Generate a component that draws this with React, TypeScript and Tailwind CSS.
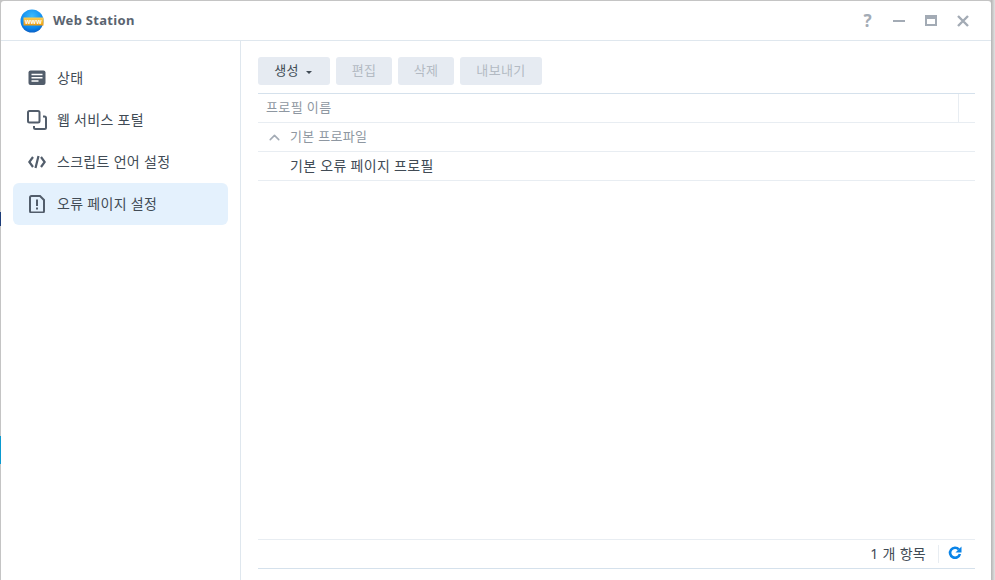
import { ChevronUp } from 'lucide-react'

const font = { fontFamily: '"Noto Sans", "Noto Sans CJK KR", sans-serif' }

function Logo() {
  return (
    <svg width="24" height="24" viewBox="0 0 24 24" className="shrink-0">
      <defs>
        <radialGradient id="globe" cx="0.5" cy="0.3" r="0.75">
          <stop offset="0" stopColor="#3dbcfd" />
          <stop offset="0.7" stopColor="#0a86ee" />
          <stop offset="1" stopColor="#0a55b8" />
        </radialGradient>
        <linearGradient id="band" x1="0" y1="0" x2="0" y2="1">
          <stop offset="0" stopColor="#fbcf55" />
          <stop offset="1" stopColor="#ec9a12" />
        </linearGradient>
      </defs>
      <circle cx="12" cy="12" r="11.500" fill="url(#globe)" />
      <rect x="3.500" y="8.500" width="20" height="8" fill="url(#band)" />
      <text x="13.500" y="15" fontSize="7" fontWeight="700" fill="#fff" textAnchor="middle" letterSpacing="0.3" fontFamily="Liberation Sans, sans-serif">www</text>
    </svg>
  )
}

function StatusIcon() {
  return (
    <svg width="18" height="16" viewBox="0 0 18 16">
      <rect x="0.500" y="0.500" width="17" height="14.500" rx="2" fill="#525d6b" />
      <path d="M3.500 4.500h11M3.500 7.800h11M3.500 11h7" stroke="#fff" strokeWidth="1.400" />
    </svg>
  )
}

function PortalIcon() {
  return (
    <svg width="20" height="20" viewBox="0 0 20 20" fill="none" stroke="#525d6b" strokeWidth="2">
      <rect x="1" y="1" width="11.500" height="11.500" rx="1.500" />
      <path d="M16 6.500h1.500a1.500 1.500 0 0 1 1.500 1.500V17.500a1.500 1.500 0 0 1-1.500 1.500H8.500A1.500 1.500 0 0 1 7 17.500V16" />
    </svg>
  )
}

function CodeIcon() {
  return (
    <svg width="18" height="14" viewBox="0 0 18 14" fill="none" stroke="#525d6b" strokeWidth="2.200">
      <path d="M5 2 1.300 7 5 12M13 2l3.700 5-3.700 5M10.500 1 7.500 13" />
    </svg>
  )
}

function ErrorIcon() {
  return (
    <svg width="16" height="18" viewBox="0 0 16 18" fill="none">
      <path d="M2.500 1H11l4 4v11a1.500 1.500 0 0 1-1.500 1.500h-11A1.500 1.500 0 0 1 1 16V2.500A1.500 1.500 0 0 1 2.500 1Z" stroke="#525d6b" strokeWidth="2" />
      <path d="M8 4.500v6.500" stroke="#525d6b" strokeWidth="2" />
      <rect x="7" y="12.500" width="2" height="2" fill="#525d6b" />
    </svg>
  )
}

function RefreshIcon() {
  return (
    <svg width="14" height="14" viewBox="0 0 14 14" fill="none" className="mb-[2px] ml-[9px] mr-[13px]">
      <path d="M10.800 3.400A5 5 0 1 0 11.900 8" stroke="#0a84e8" strokeWidth="2.600" />
      <path d="M13.500 0.500V6.500H7.500Z" fill="#0a84e8" />
    </svg>
  )
}

const navItems = [
  { label: '상태', icon: <StatusIcon /> },
  { label: '웹 서비스 포털', icon: <PortalIcon /> },
  { label: '스크립트 언어 설정', icon: <CodeIcon /> },
  { label: '오류 페이지 설정', icon: <ErrorIcon />, active: true },
]

function Sidebar() {
  return (
    <aside className="w-[240px] shrink-0 border-r border-[#dfe7ee] pl-3 pr-3 pt-[16px]">
      <ul className="flex flex-col">
        {navItems.map(item => (
          <li
            key={item.label}
            className={`flex h-[42px] w-[215px] items-center rounded-md text-[14px] tracking-[0.3px] text-[#414b55] ${item.active ? 'bg-[#e4f1fd]' : ''}`}
          >
            <span className="flex w-[44px] shrink-0 justify-center pl-[3px]">{item.icon}</span>
            <span className="pb-[2px]">{item.label}</span>
          </li>
        ))}
      </ul>
    </aside>
  )
}

function ToolButton({ label, disabled, caret }: { label: string; disabled?: boolean; caret?: boolean }) {
  return (
    <button
      className={`flex h-[28px] items-center justify-center rounded-[3px] bg-[#e6ebf2] text-[13px] tracking-[0.4px] ${disabled ? 'text-[#b3bac3]' : 'text-[#414b55]'} ${caret ? 'w-[72px] pr-[2px]' : label.length > 2 ? 'w-[82px]' : 'w-[56px]'}`}
    >
      {label}
      {caret && <span className="ml-[7px] mt-[2px] border-x-[3px] border-t-[3px] border-x-transparent border-t-[#414b55]" />}
    </button>
  )
}

export default function App() {
  return (
    <div className="relative flex h-[580px] w-[995px] overflow-hidden bg-[#c4c4c4] pt-px" style={font}>
      {/* bits of the desktop showing round the window */}
      <span className="absolute left-0 top-[212px] h-[14px] w-px bg-[#1c3c78]" />
      <span className="absolute left-0 top-[436px] h-[28px] w-px bg-[#0a9ad0]" />
      <span className="absolute left-[991px] top-[64px] h-[6px] w-[4px] bg-[#5a5a5a]" />
      <span className="absolute left-[992px] top-[186px] h-[10px] w-[2px] bg-[#4a4a4a]" />

      <div className="w-px shrink-0" />
      <div className="flex h-[579px] w-[990px] shrink-0 flex-col rounded-t-[3px] bg-white">
        <header className="flex h-[40px] shrink-0 items-center border-b border-[#dfe7ee] pl-[19px] pr-[22px]">
          <Logo />
          <span className="ml-[9px] text-[13px] font-bold tracking-[0.3px] text-[#5a6470]">Web Station</span>
          <div className="ml-auto flex items-center text-[#a3abb5]">
            <span className="w-[13px] text-center text-[17px] font-bold leading-none">?</span>
            <span className="ml-[19px] h-[2px] w-[12px] bg-[#a3abb5]" />
            <span className="ml-[20px] h-[11px] w-[12px] border-x-2 border-b-2 border-t-[4px] border-[#a3abb5]" />
            <svg width="12" height="12" viewBox="0 0 12 12" className="ml-[20px]" stroke="#a3abb5" strokeWidth="2.400">
              <path d="M1 1l10 10M11 1 1 11" />
            </svg>
          </div>
        </header>

        <div className="flex min-h-0 flex-1">
          <Sidebar />
          <main className="flex min-w-0 flex-1 flex-col pb-[11px] pl-[17px] pr-[16px] pt-[16px]">
            <div className="flex gap-[6px]">
              <ToolButton label="생성" caret />
              <ToolButton label="편집" disabled />
              <ToolButton label="삭제" disabled />
              <ToolButton label="내보내기" disabled />
            </div>

            <div className="mt-[8px] flex h-[30px] items-center border-y border-t-[#d5e1ec] border-b-[#e8edf2] text-[13px] tracking-[0.4px] text-[#8e97a1]">
              <span className="flex-1 pl-[8px]">프로필 이름</span>
              <span className="h-full w-[17px] border-l border-[#e8edf2]" />
            </div>
            <div className="flex h-[29px] items-center border-b border-[#e8edf2] text-[13px] tracking-[0.3px] text-[#8e97a1]">
              <ChevronUp size={17} strokeWidth={2.200} className="ml-[8px] text-[#a3abb5]" />
              <span className="ml-[7px]">기본 프로파일</span>
            </div>
            <div className="flex h-[29px] items-center border-b border-[#e8edf2] pb-[2px] pl-[32px] text-[14px] tracking-[0.3px] text-[#414b55]">
              기본 오류 페이지 프로필
            </div>

            <div className="flex-1" />

            <footer className="flex h-[30px] items-center justify-end border-y border-t-[#e8edf2] border-b-[#d5e1ec] text-[14px] tracking-[0.3px] text-[#414b55]">
              <span className="pb-[2px]">1 개 항목</span>
              <span className="ml-[12px] h-[18px] border-l border-[#e8edf2]" />
              <RefreshIcon />
            </footer>
          </main>
        </div>
      </div>
      <div className="relative -mt-px w-[4px] shrink-0 bg-gradient-to-r from-[#b4b4b4] to-[#e2e2e2]" />
    </div>
  )
}
